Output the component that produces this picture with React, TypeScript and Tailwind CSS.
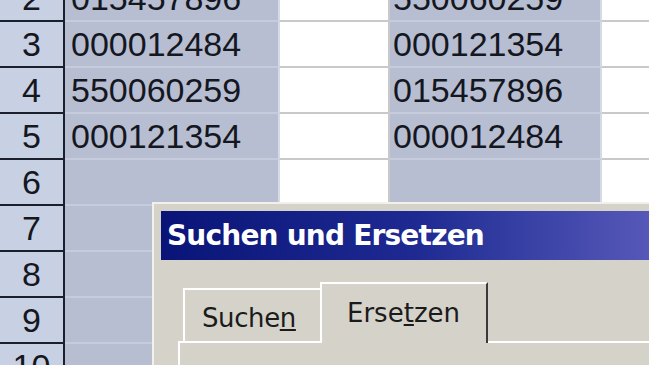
import React from 'react'

const rows = [
  { n: 2, a: '015457896', c: '550060259' },
  { n: 3, a: '000012484', c: '000121354' },
  { n: 4, a: '550060259', c: '015457896' },
  { n: 5, a: '000121354', c: '000012484' },
  { n: 6, a: '', c: '' },
  { n: 7, a: '', c: '' },
  { n: 8, a: '', c: '' },
  { n: 9, a: '', c: '' },
  { n: 10, a: '', c: '' },
]

const cellText = "font-['Liberation_Sans',Arial,sans-serif] text-[34px] leading-none text-[#15171f]"

const App = () => {
  return (
    <div className="relative w-[649px] h-[365px] overflow-hidden bg-white">
      {/* sheet */}
      <div className="-mt-[24px] flex flex-col">
        {rows.map((r) => (
          <div key={r.n} className="flex h-[46px]">
            <div className={`w-[65px] shrink-0 flex items-center justify-center bg-[#c8d0e3] border-r-2 border-b-2 border-[#1b1e2b] ${cellText}`}>
              {r.n}
            </div>
            <div className={`w-[215px] shrink-0 flex items-center pl-[6px] bg-[#b7bed2] border-r-2 border-b-2 border-r-[#d6dae4] border-b-[#c6ccdc] ${cellText}`}>
              {r.a}
            </div>
            <div className="w-[110px] shrink-0 bg-white border-r-2 border-b-2 border-[#c9c9c9]" />
            <div className={`w-[212px] shrink-0 flex items-center pl-[3px] bg-[#b7bed2] border-r-2 border-b-2 border-r-[#d6dae4] border-b-[#c6ccdc] ${cellText}`}>
              {r.c}
            </div>
            <div className="flex-1 bg-white border-b-2 border-[#c9c9c9]" />
          </div>
        ))}
      </div>

      {/* dialog */}
      <div className="absolute left-[152px] top-[202px] w-[520px] h-[200px] border-l-2 border-t-2 border-[#f2f0ea] bg-[#d5d2ca] pl-[7px] pt-[7px] font-['DejaVu_Sans',Tahoma,sans-serif]">
        <div className="h-[49px] flex items-center pl-[6px] bg-gradient-to-r from-[#0a1478] via-[#1e2a92] to-[#5c5cbc] text-white font-bold text-[28px] tracking-[-0.8px]">
          Suchen und Ersetzen
        </div>
        <div className="ml-[17px] mt-[22px]">
          <div className="flex items-end h-[59px] pl-[5px]">
            <div className="w-[137px] h-[53px] flex items-center pl-[17px] pt-[6px] border-t-2 border-l-2 border-white text-[26px] text-[#1b1b1b] tracking-[-0.4px]">
              Suche<u className="underline-offset-2">n</u>
            </div>
            <div className="relative z-10 -mb-[2px] w-[168px] h-[61px] flex items-center pl-[25px] border-t-2 border-l-2 border-r-2 border-t-white border-l-white border-r-[#3a3a3a] bg-[#d5d2ca] text-[26px] text-[#1b1b1b]">
              Erse<u className="underline-offset-2">t</u>zen
            </div>
          </div>
          <div className="h-[100px] border-t-2 border-l-2 border-white pl-[22px] pt-[15px] text-[26px] text-[#1b1b1b]">
            Suchen nach:
          </div>
        </div>
      </div>
    </div>
  )
}

export default App
